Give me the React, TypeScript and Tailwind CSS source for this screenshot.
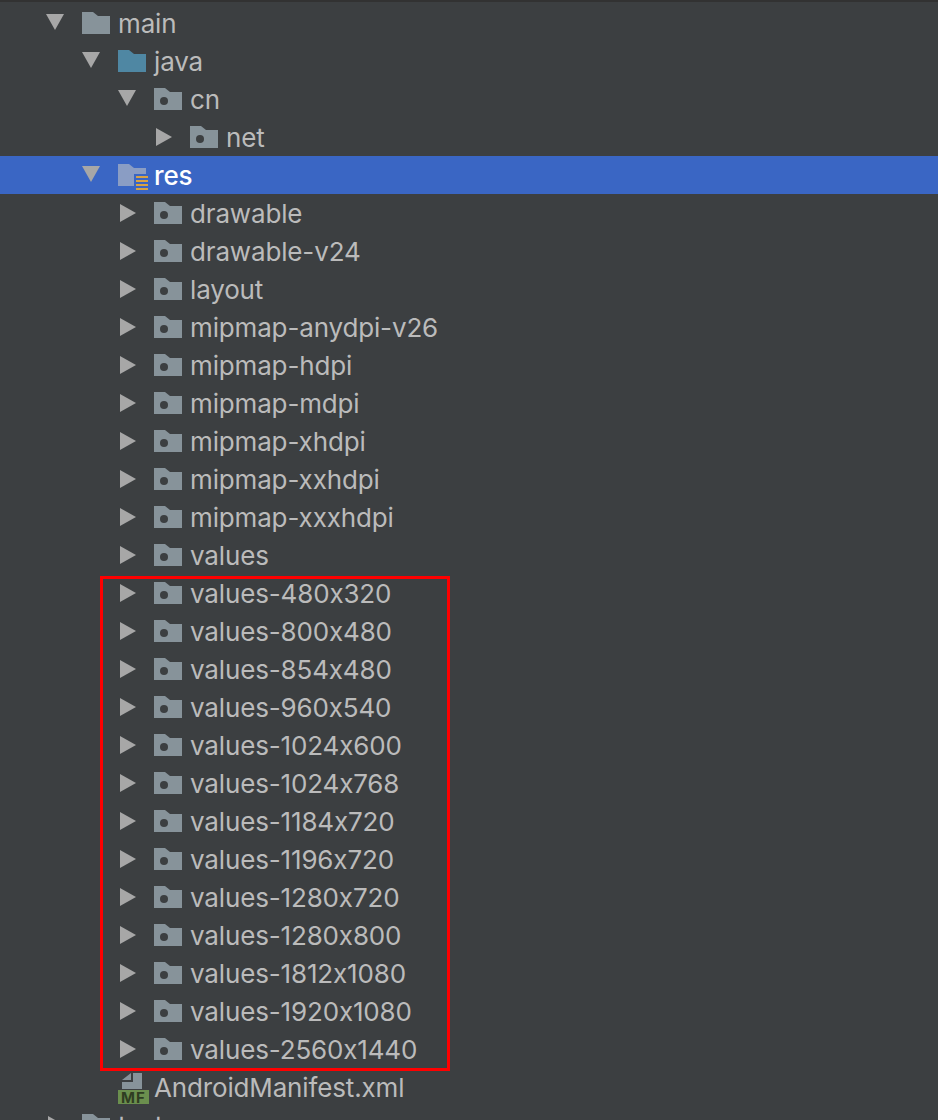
const font = "font-['Inter','Liberation_Sans',sans-serif]";
// Inter swaps the x between digits for a multiply sign unless calt is off
const label =
  "whitespace-nowrap pt-[1px] text-[26px] leading-none tracking-[-0.15px] [font-feature-settings:'calt'_0]";

type Kind = "plain" | "source" | "package" | "res";

interface RowProps {
  depth: number;
  name: string;
  open?: boolean;
  kind?: Kind;
  selected?: boolean;
}

function Arrow({ open }: { open?: boolean }) {
  return open ? (
    <svg width="18" height="16" viewBox="0 0 18 16" className="mt-[-2px]">
      <path d="M0 0h18L9 16z" fill="#a7a7a7" />
    </svg>
  ) : (
    <svg width="16" height="18" viewBox="0 0 16 18" className="ml-[2px]">
      <path d="M0 0l16 9L0 18z" fill="#a7a7a7" />
    </svg>
  );
}

function Folder({ kind = "package" }: { kind?: Kind }) {
  const color =
    kind === "source" ? "#4f87a3" : kind === "res" ? "#8a9dc4" : "#87939a";
  return (
    <svg width="28" height="22" viewBox="0 0 28 22" className="overflow-visible">
      <path d="M0 0h11l5 4h12v18H0z" fill={color} />
      {kind === "package" && <circle cx="10" cy="13" r="4" fill="#3c3f41" />}
      {kind === "res" && (
        <g>
          <path d="M16 10h14v15H16z" fill="#3a66c4" />
          <path
            d="M18 12h12v2H18zM18 16h12v2H18zM18 20h12v2H18zM18 24h12v2H18z"
            fill="#d9a343"
          />
        </g>
      )}
    </svg>
  );
}

function ManifestIcon() {
  return (
    <div className="mt-[3px] flex w-[36px] shrink-0 flex-col">
      <svg width="20" height="16" viewBox="0 0 20 16" className="ml-[4px]">
        <path d="M11 0h9v16H0V9h11z" fill="#87939a" />
        <path d="M0 7l9-7v7z" fill="#87939a" />
      </svg>
      <div className="mt-[1px] flex h-[14px] w-[31px] items-center justify-center bg-[#6b8f4e] text-[15px] leading-none font-bold tracking-[1px] text-[#2f3d22]">
        MF
      </div>
    </div>
  );
}

function Row({ depth, name, open, kind, selected }: RowProps) {
  return (
    <div
      className={
        "flex h-[38px] shrink-0 items-center " +
        (selected ? "bg-[#3a66c4] font-medium text-white" : "text-[#bbbbbb]")
      }
    >
      <div
        className="flex w-[36px] shrink-0 items-center"
        style={{ marginLeft: 46 + depth * 36 }}
      >
        <Arrow open={open} />
      </div>
      <Folder kind={kind} />
      <span className={`ml-[8px] ${label}`}>{name}</span>
    </div>
  );
}

const resFolders = [
  "drawable",
  "drawable-v24",
  "layout",
  "mipmap-anydpi-v26",
  "mipmap-hdpi",
  "mipmap-mdpi",
  "mipmap-xhdpi",
  "mipmap-xxhdpi",
  "mipmap-xxxhdpi",
  "values",
  "values-480x320",
  "values-800x480",
  "values-854x480",
  "values-960x540",
  "values-1024x600",
  "values-1024x768",
  "values-1184x720",
  "values-1196x720",
  "values-1280x720",
  "values-1280x800",
  "values-1812x1080",
  "values-1920x1080",
  "values-2560x1440",
];

export default function App() {
  return (
    <div
      className={`relative flex h-[1120px] w-[938px] flex-col overflow-hidden border-t-2 border-[#323232] bg-[#3c3f41] pt-[2px] ${font}`}
    >
      <Row depth={0} name="main" open kind="plain" />
      <Row depth={1} name="java" open kind="source" />
      <Row depth={2} name="cn" open />
      <Row depth={3} name="net" />
      <Row depth={1} name="res" open kind="res" selected />
      {resFolders.map((name) => (
        <Row key={name} depth={2} name={name} />
      ))}
      <div className="flex h-[38px] shrink-0 items-center pl-[118px] text-[#bbbbbb]">
        <ManifestIcon />
        <span className={label}>AndroidManifest.xml</span>
      </div>
      <Row depth={0} name="test" kind="plain" />
      <div className="pointer-events-none absolute left-[100px] top-[574px] h-[495px] w-[350px] border-[3px] border-[#ff0000]" />
    </div>
  );
}
